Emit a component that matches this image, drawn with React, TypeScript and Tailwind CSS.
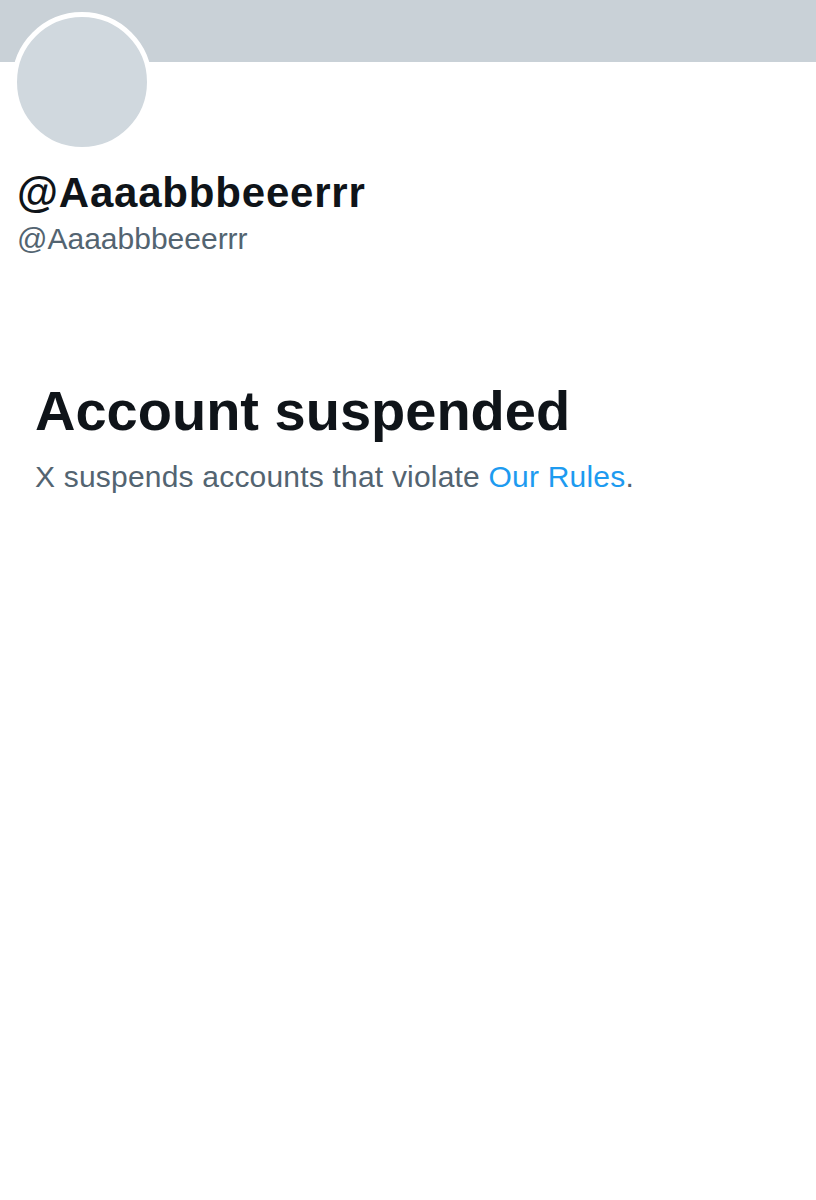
export default function App() {
  return (
    <div className="w-[816px] h-[1200px] bg-white relative overflow-hidden" style={{ fontFamily: '"Liberation Sans", Arial, sans-serif' }}>
      <div className="h-[62px] bg-[#c9d1d7]" />
      <div className="absolute left-[12px] top-[12px] w-[140px] h-[140px] rounded-full bg-[#d0d8de] border-[5px] border-white" />
      <div className="pt-[107px] pl-[17px]">
        <div className="text-[42px] leading-[48px] font-bold text-[#0f1419] tracking-[0.8px]">@Aaaabbbeeerrr</div>
        <div className="text-[30px] leading-[36px] text-[#536471] mt-[4px]">@Aaaabbbeeerrr</div>
      </div>
      <div className="pl-[35px] pt-[122px]">
        <div className="text-[56px] leading-[64px] font-bold text-[#0f1419]">Account suspended</div>
        <div className="text-[30px] leading-[36px] text-[#536471] mt-[16px] tracking-[0.2px]">
          X suspends accounts that violate <span className="text-[#1d9bf0]">Our Rules</span>.
        </div>
      </div>
    </div>
  );
}
